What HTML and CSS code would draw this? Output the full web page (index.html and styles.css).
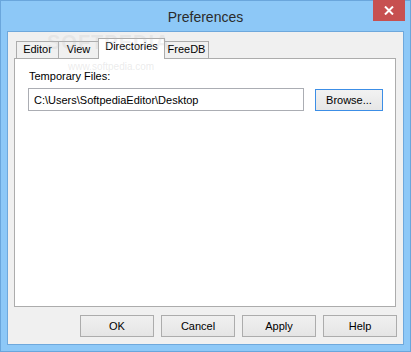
FILE: index.html
```html
<!DOCTYPE html>
<html>
<head>
    <title>Preferences</title>
    <link rel="stylesheet" href="styles.css">
</head>
<body>
    <div class="window">
        <div class="titlebar">
            <span class="title">Preferences</span>
            <div class="close">
                <svg width="10" height="9" viewBox="0 0 10 9">
                    <path d="M1 0.5 L9 8.5 M9 0.5 L1 8.5" stroke="#fff" stroke-width="2"/>
                </svg>
            </div>
        </div>

        <div class="client">
            <div class="tabs">
                <div class="tab tab-editor">Editor</div>
                <div class="tab tab-view">View</div>
                <div class="tab tab-dirs selected">Directories</div>
                <div class="tab tab-freedb">FreeDB</div>
            </div>

            <div class="panel">
                <label class="field-label" for="tempFiles">Temporary Files:</label>
                <div class="field-row">
                    <input class="path-input" id="tempFiles" type="text" value="C:\Users\SoftpediaEditor\Desktop">
                    <button class="btn browse" type="button">Browse...</button>
                </div>
            </div>

            <div class="actions">
                <button class="btn" type="button">OK</button>
                <button class="btn" type="button">Cancel</button>
                <button class="btn" type="button">Apply</button>
                <button class="btn" type="button">Help</button>
            </div>

            <!-- faint watermark over the tabs -->
            <div class="watermark">
                <span class="wm-big">SOFTPEDIA</span>
                <span class="wm-url">www.softpedia.com</span>
            </div>
        </div>
    </div>
</body>
</html>
```

FILE: styles.css
```css
* {
    box-sizing: border-box;
}

body {
    margin: 0;
    font-family: "Liberation Sans", Arial, sans-serif;
    font-size: 11px;
    color: #000;
}

.window {
    width: 411px;
    height: 352px;
    background: #8dc8f7;
    border: 1px solid #6aa6dc;
    display: flex;
    flex-direction: column;
    padding: 0 6px 6px 6px;
}

.titlebar {
    height: 30px;
    position: relative;
    display: flex;
    align-items: center;
    justify-content: center;
}

.title {
    font-size: 14px;
    color: #2b2b2b;
    margin-top: 1px;
}

.close {
    position: absolute;
    right: -1px;
    top: -1px;
    width: 32px;
    height: 21px;
    background: #c75050;
    display: flex;
    align-items: center;
    justify-content: center;
}

.client {
    flex: 1;
    background: #f0f0f0;
    border: 1px solid #6ea8dc;
    display: flex;
    flex-direction: column;
    padding: 6px 7px 7px 6px;
    position: relative;
}

.tabs {
    height: 20px;
    display: flex;
    align-items: flex-end;
    padding-left: 2px;
}

.tab {
    height: 17px;
    border: 1px solid #acacac;
    border-bottom: none;
    background: #f0f0f0;
    text-align: center;
    line-height: 15px;
    margin-left: -1px;
}

.tab-editor {
    width: 43px;
    margin-left: 0;
}

.tab-view {
    width: 41px;
}

.tab-dirs {
    width: 67px;
}

.tab-freedb {
    width: 45px;
}

.tab.selected {
    height: 21px;
    margin-bottom: -1px;
    background: #fff;
    position: relative;
    z-index: 1;
    line-height: 15px;
}

.panel {
    flex: 1;
    background: #fff;
    border: 1px solid #acacac;
    padding: 11px 0 0 13px;
    display: flex;
    flex-direction: column;
}

.field-label {
    margin-left: 1px;
    line-height: 13px;
}

.field-row {
    display: flex;
    margin-top: 5px;
}

.path-input {
    width: 276px;
    height: 23px;
    border: 1px solid #abadb3;
    padding: 0 0 0 5px;
    font-family: inherit;
    font-size: 11px;
    color: #000;
    background: #fff;
}

.btn {
    height: 22px;
    width: 74px;
    border: 1px solid #acacac;
    background: linear-gradient(#f0f0f0, #e5e5e5);
    font-family: inherit;
    font-size: 11px;
    color: #000;
    padding: 0;
}

.browse {
    width: 68px;
    margin-left: 11px;
    margin-top: 1px;
    border-color: #3c8ee6;
    background: linear-gradient(#f2f2f2, #e6e6e6);
}

.actions {
    height: 22px;
    margin-top: 8px;
    margin-right: -1px;
    display: flex;
    justify-content: flex-end;
    gap: 7px;
}

.watermark {
    position: absolute;
    left: 39px;
    top: 0;
    pointer-events: none;
    z-index: 2;
}

.wm-big {
    display: block;
    font-size: 20px;
    line-height: 20px;
    font-weight: bold;
    letter-spacing: 1px;
    color: rgba(190, 190, 190, 0.22);
}

.wm-url {
    display: block;
    margin-left: 21px;
    margin-top: 10px;
    font-size: 10px;
    line-height: 10px;
    color: rgba(190, 190, 190, 0.3);
}
```
